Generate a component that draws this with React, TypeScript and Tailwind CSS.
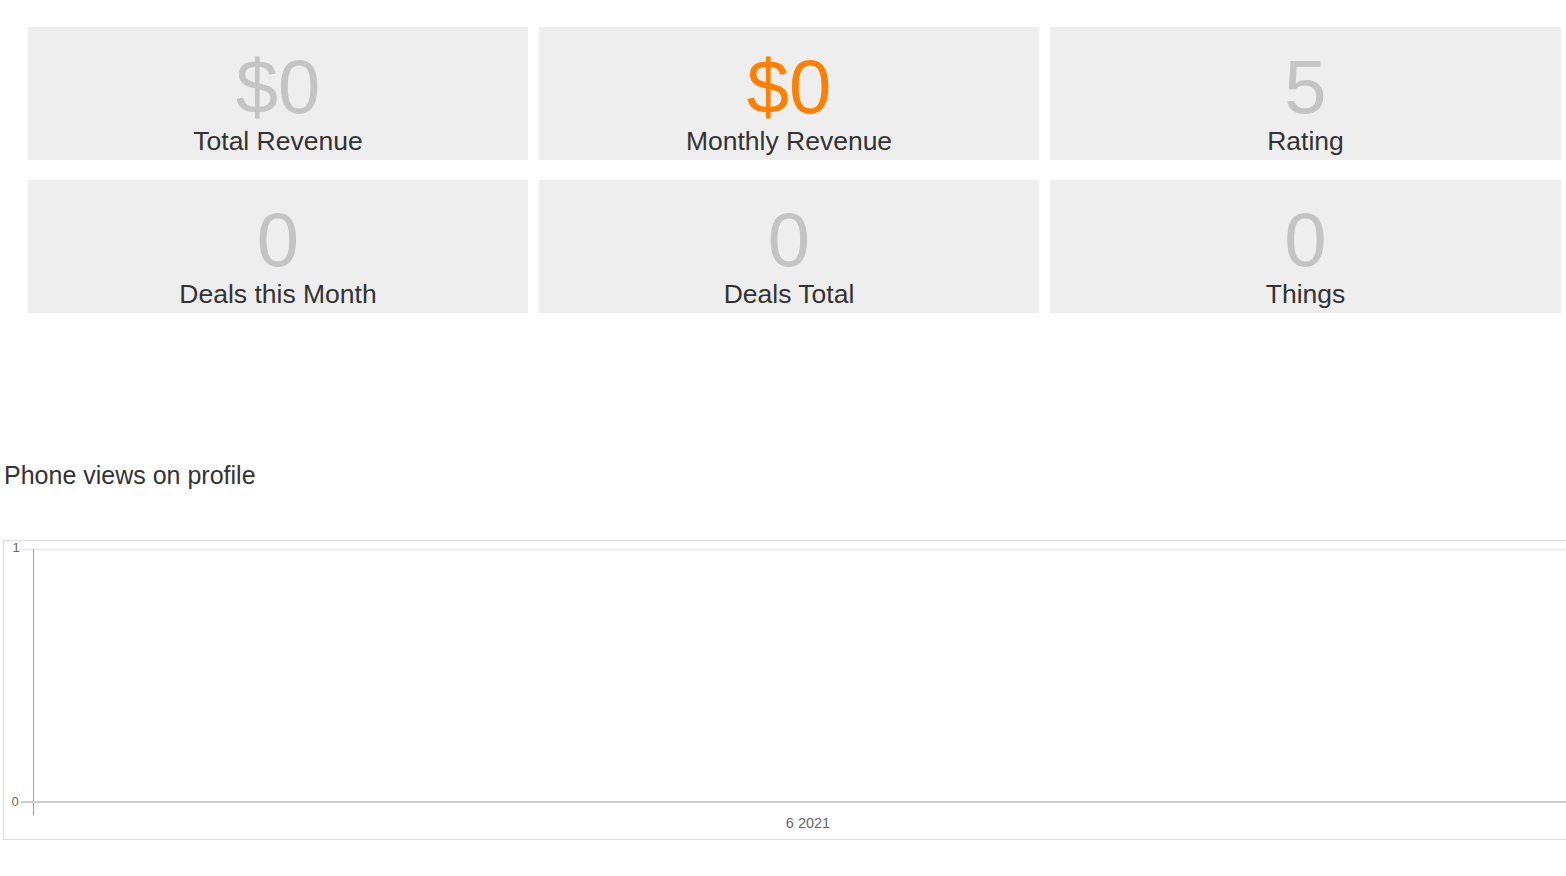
import React from "react";

interface StatCard {
    value: string;
    label: string;
    highlight?: boolean;
}

const stats: StatCard[] = [
    { value: "$0", label: "Total Revenue" },
    { value: "$0", label: "Monthly Revenue", highlight: true },
    { value: "5", label: "Rating" },
    { value: "0", label: "Deals this Month" },
    { value: "0", label: "Deals Total" },
    { value: "0", label: "Things" },
];


function StatBox({ stat }: { stat: StatCard }) {
    return (
        <div className="h-[133px] bg-[#eeeeee] pt-[21px] flex flex-col items-center">
            <div className={"text-[76px] leading-[78px] " + (stat.highlight ? "text-[#ff8000]" : "text-[#c4c4c4]")}>
                {stat.value}
            </div>
            <div className="text-[26.5px] leading-[30px] text-[#333333]">
                {stat.label}
            </div>
        </div>
    );
}


function PhoneViewsChart() {
    return (
        <div className="ml-[3px] w-[1600px] h-[300px] border border-[#dddddd] bg-white">
            <svg width="1598" height="298" className="block">
                {/* gridline for 1 */}
                <line x1="16" y1="8.5" x2="1598" y2="8.5" stroke="#ebebeb" strokeWidth="2" />
                {/* y axis */}
                <line x1="29.5" y1="8" x2="29.5" y2="274" stroke="#a0a0a0" strokeWidth="1" />
                {/* baseline */}
                <line x1="17" y1="261" x2="1598" y2="261" stroke="#cccccc" strokeWidth="2" />

                <text x="12" y="11" fontSize="13" fill="#666666" textAnchor="middle" fontFamily="Liberation Sans, Arial, sans-serif">1</text>
                <text x="11" y="265" fontSize="13" fill="#666666" textAnchor="middle" fontFamily="Liberation Sans, Arial, sans-serif">0</text>
                <text x="804" y="287" fontSize="14.5" fill="#666666" textAnchor="middle" fontFamily="Liberation Sans, Arial, sans-serif">6 2021</text>
            </svg>
        </div>
    );
}


function App() {
    return (
        <div className="w-[1566px] overflow-hidden bg-white font-['Liberation_Sans',Arial,sans-serif]">
            <div className="pt-[27px] pl-[28px] w-[1600px]">
                <div className="grid grid-cols-[500px_500px_511px] gap-x-[11px] gap-y-[20px]">
                    {stats.map((stat) => (
                        <StatBox key={stat.label} stat={stat} />
                    ))}
                </div>
            </div>

            <h3 className="mt-[148px] pl-[4px] text-[25px] leading-[29px] text-[#333333]">
                Phone views on profile
            </h3>

            <div className="mt-[50px] pb-[36px]">
                <PhoneViewsChart />
            </div>
        </div>
    );
}


export default App;
